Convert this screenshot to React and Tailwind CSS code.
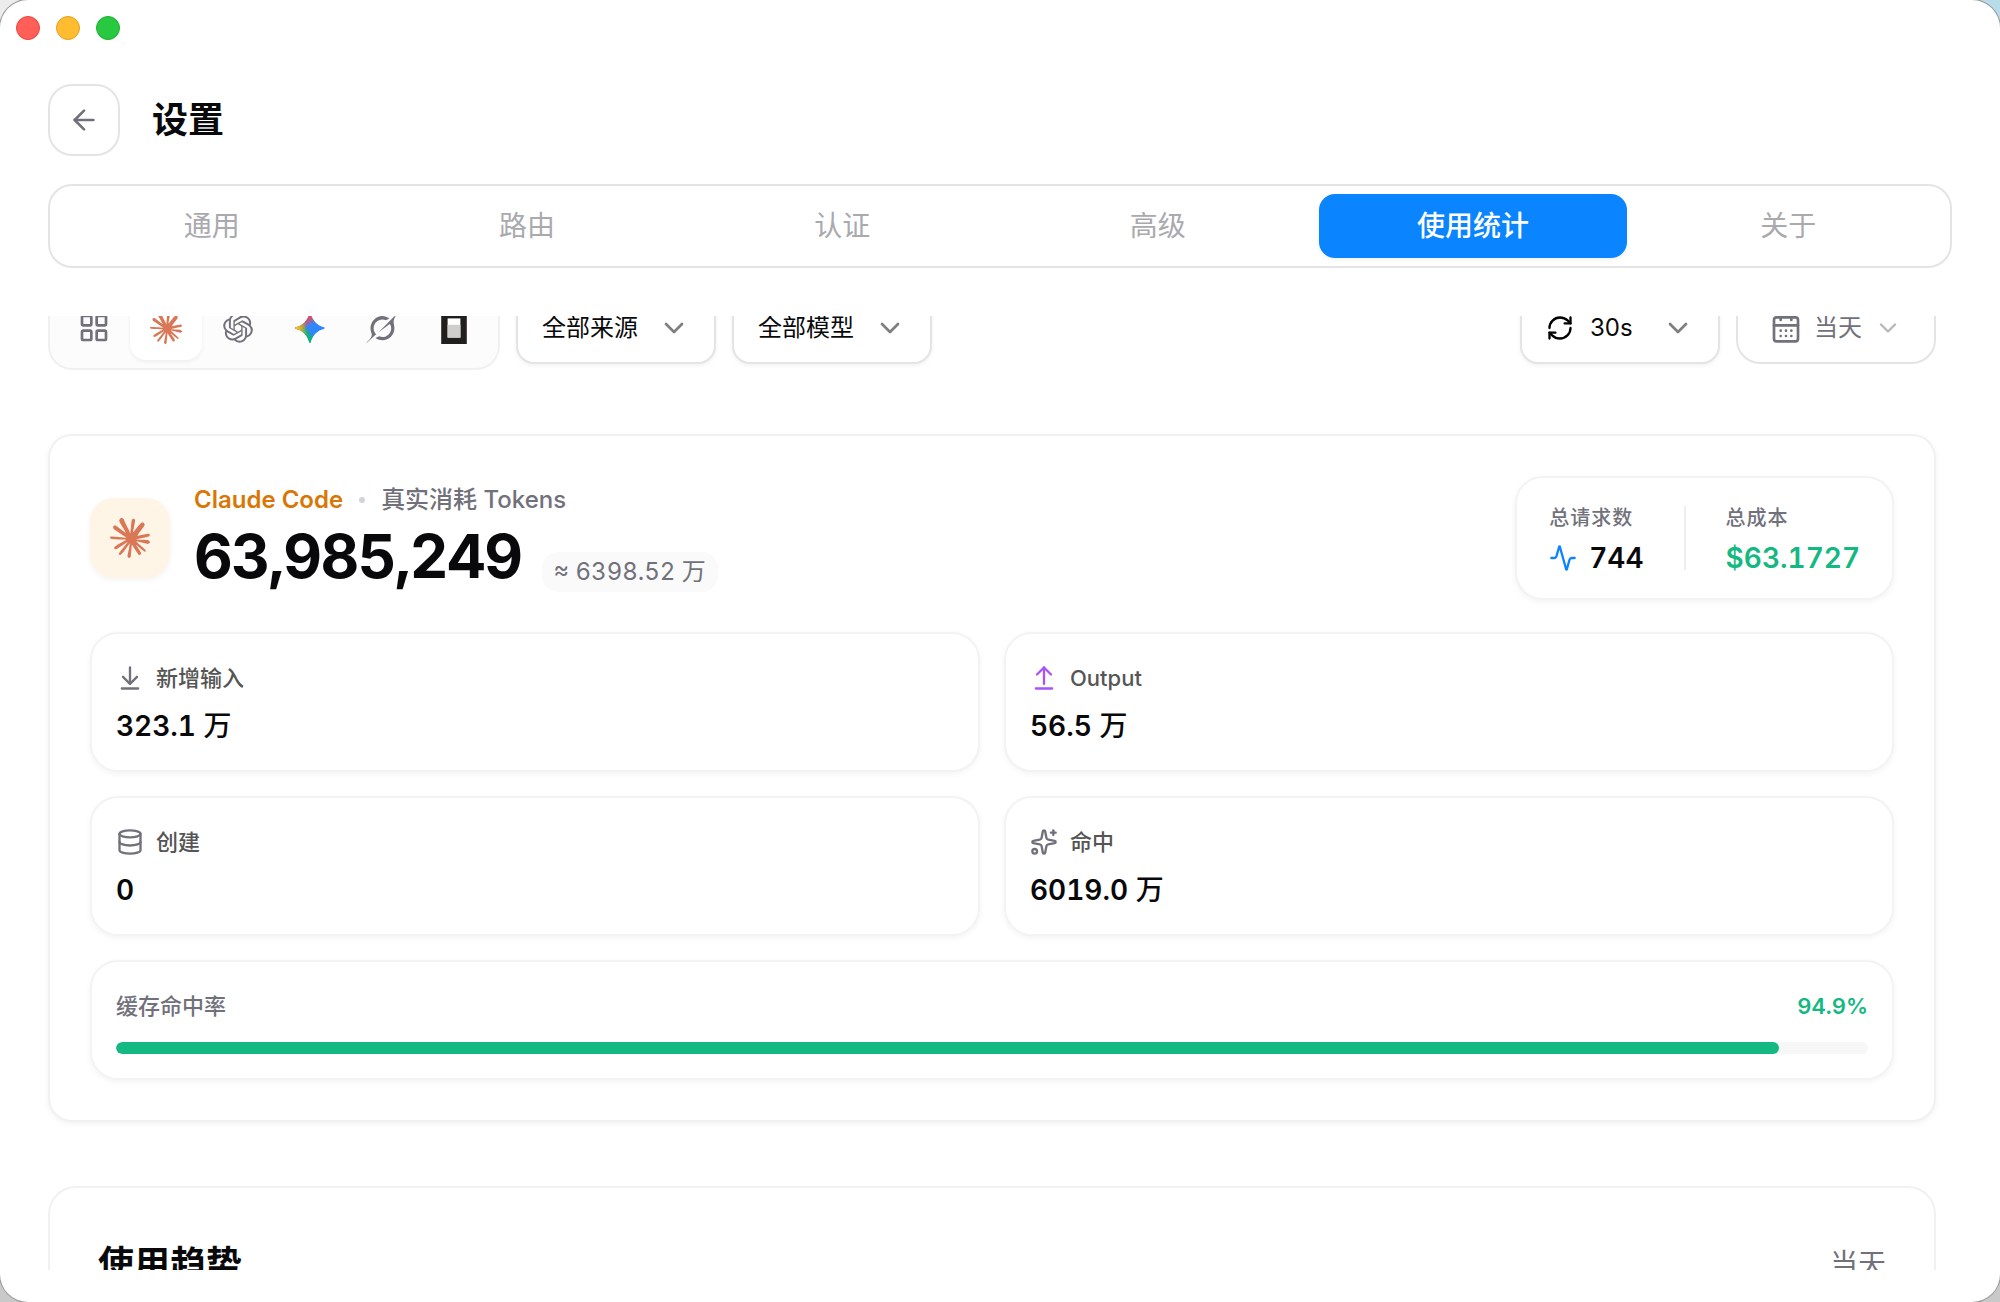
import React, { useLayoutEffect, useRef, useState } from 'react';
import {
  Activity,
  ArrowDownToLine,
  ArrowLeft,
  ArrowUpFromLine,
  CalendarDays,
  ChevronDown,
  Database,
  LayoutGrid,
  RefreshCw,
  Sparkles,
} from 'lucide-react';
import clsx from 'clsx';

const TABS = ['通用', '路由', '认证', '高级', '使用统计', '关于'];
const CACHE_HIT_RATE = 94.9;

const ClaudeIcon = ({ className }) => (
  <svg viewBox="0 0 24 24" className={className} fill="#D97757" aria-hidden="true">
    <path d="M4.709 15.955l4.72-2.647.08-.23-.08-.128H9.2l-.79-.048-2.698-.073-2.339-.097-2.266-.122-.571-.121L0 11.784l.055-.352.48-.321.686.06 1.52.103 2.278.158 1.652.097 2.449.255h.389l.055-.157-.134-.098-.103-.097-2.358-1.596-2.552-1.688-1.336-.972-.724-.491-.364-.462-.158-1.008.656-.722.881.06.225.061.893.686 1.908 1.476 2.491 1.833.365.304.145-.103.019-.073-.164-.274-1.355-2.446-1.446-2.49-.644-1.032-.17-.619a2.97 2.97 0 01-.104-.729L6.283.134 6.696 0l.996.134.42.364.62 1.414 1.002 2.229 1.555 3.03.456.898.243.832.091.255h.158V9.01l.128-1.706.237-2.095.23-2.695.08-.76.376-.91.747-.492.584.28.48.685-.067.444-.286 1.851-.559 2.903-.364 1.942h.212l.243-.242.985-1.306 1.652-2.064.73-.82.85-.904.547-.431h1.033l.76 1.129-.34 1.166-1.064 1.347-.881 1.142-1.264 1.7-.79 1.36.073.11.188-.02 2.856-.606 1.543-.28 1.841-.315.833.388.091.395-.328.807-1.969.486-2.309.462-3.439.813-.042.03.049.061 1.549.146.662.036h1.622l3.02.225.79.522.474.638-.079.485-1.215.62-1.64-.389-3.829-.91-1.312-.329h-.182v.11l1.093 1.068 2.006 1.81 2.509 2.33.127.578-.322.455-.34-.049-2.205-1.657-.851-.747-1.926-1.62h-.128v.17l.444.649 2.345 3.521.122 1.08-.17.353-.608.213-.668-.122-1.374-1.925-1.415-2.167-1.143-1.943-.14.08-.674 7.254-.316.37-.729.28-.607-.461-.322-.747.322-1.476.389-1.924.315-1.53.286-1.9.17-.632-.012-.042-.14.018-1.434 1.967-2.18 2.945-1.726 1.845-.414.164-.717-.37.067-.662.401-.589 2.388-3.036 1.44-1.882.93-1.086-.006-.158h-.055L4.132 18.56l-1.13.146-.487-.456.061-.746.231-.243 1.908-1.312-.006.006z" />
  </svg>
);

const OpenAIIcon = ({ className }) => (
  <svg viewBox="0 0 24 24" className={className} fill="currentColor" fillRule="evenodd" aria-hidden="true">
    <path d="M21.55 10.004a5.416 5.416 0 00-.478-4.501c-1.217-2.09-3.662-3.166-6.05-2.66A5.59 5.59 0 0010.831 1C8.39.995 6.224 2.546 5.473 4.838A5.553 5.553 0 001.76 7.496a5.487 5.487 0 00.691 6.5 5.416 5.416 0 00.477 4.502c1.217 2.09 3.662 3.165 6.05 2.66A5.586 5.586 0 0013.168 23c2.443.006 4.61-1.546 5.361-3.84a5.553 5.553 0 003.715-2.66 5.488 5.488 0 00-.693-6.497v.001zm-8.381 11.558a4.199 4.199 0 01-2.675-.954c.034-.018.093-.05.132-.074l4.44-2.53a.71.71 0 00.364-.623v-6.176l1.877 1.069c.02.01.033.029.036.05v5.115c-.003 2.274-1.87 4.118-4.174 4.123zM4.192 17.78a4.059 4.059 0 01-.498-2.763c.032.02.09.055.131.078l4.44 2.53c.225.13.504.13.73 0l5.42-3.088v2.138a.068.068 0 01-.027.057L9.9 19.288c-1.999 1.136-4.552.46-5.707-1.51h-.001zM3.023 8.216A4.15 4.15 0 015.198 6.41l-.002.151v5.06a.711.711 0 00.364.624l5.42 3.087-1.876 1.07a.067.067 0 01-.063.005l-4.489-2.559c-1.995-1.14-2.679-3.658-1.53-5.63h.001zm15.417 3.54l-5.42-3.088L14.896 7.6a.067.067 0 01.063-.006l4.489 2.557c1.998 1.14 2.683 3.662 1.529 5.633a4.163 4.163 0 01-2.174 1.807V12.38a.71.71 0 00-.363-.623zm1.867-2.773a6.04 6.04 0 00-.132-.078l-4.44-2.53a.731.731 0 00-.729 0l-5.42 3.088V7.325a.068.068 0 01.027-.057L14.1 4.713c2-1.137 4.555-.46 5.707 1.513.487.833.664 1.809.499 2.757h.001zm-11.741 3.81l-1.877-1.068a.065.065 0 01-.036-.051V6.559c.001-2.277 1.873-4.122 4.181-4.12.976 0 1.92.338 2.671.954-.034.018-.092.05-.131.073l-4.44 2.53a.71.71 0 00-.365.623l-.003 6.173v.002zm1.02-2.168L12 9.25l2.414 1.375v2.75L12 14.75l-2.415-1.375v-2.75z" />
  </svg>
);

const GEMINI_PATH =
  'M20.616 10.835a14.147 14.147 0 01-4.45-3.001 14.111 14.111 0 01-3.678-6.452.503.503 0 00-.975 0 14.134 14.134 0 01-3.679 6.452 14.155 14.155 0 01-4.45 3.001c-.65.28-1.318.505-2.002.678a.502.502 0 000 .975c.684.172 1.35.397 2.002.677a14.147 14.147 0 014.45 3.001 14.112 14.112 0 013.679 6.453.502.502 0 00.975 0c.172-.685.397-1.351.677-2.003a14.145 14.145 0 013.001-4.45 14.113 14.113 0 016.453-3.678.503.503 0 000-.975 13.245 13.245 0 01-2.003-.678z';

const GeminiIcon = ({ className }) => (
  <svg viewBox="0 0 24 24" className={className} aria-hidden="true">
    <defs>
      <linearGradient id="gm-green" gradientUnits="userSpaceOnUse" x1="7" x2="11" y1="15.5" y2="12">
        <stop stopColor="#08B962" />
        <stop offset="1" stopColor="#08B962" stopOpacity="0" />
      </linearGradient>
      <linearGradient id="gm-red" gradientUnits="userSpaceOnUse" x1="8" x2="11.5" y1="5.5" y2="11">
        <stop stopColor="#F94543" />
        <stop offset="1" stopColor="#F94543" stopOpacity="0" />
      </linearGradient>
      <linearGradient id="gm-yellow" gradientUnits="userSpaceOnUse" x1="3.5" x2="17.5" y1="13.5" y2="12">
        <stop stopColor="#FABC12" />
        <stop offset=".46" stopColor="#FABC12" stopOpacity="0" />
      </linearGradient>
    </defs>
    <path d={GEMINI_PATH} fill="#3186FF" />
    <path d={GEMINI_PATH} fill="url(#gm-green)" />
    <path d={GEMINI_PATH} fill="url(#gm-red)" />
    <path d={GEMINI_PATH} fill="url(#gm-yellow)" />
  </svg>
);

const GrokIcon = ({ className }) => (
  <svg viewBox="0 0 24 24" className={className} fill="currentColor" fillRule="evenodd" aria-hidden="true">
    <path d="M9.27 15.29l7.978-5.897c.391-.29.95-.177 1.137.272.98 2.369.542 5.215-1.41 7.169-1.951 1.954-4.667 2.382-7.149 1.406l-2.711 1.257c3.889 2.661 8.611 2.003 11.562-.953 2.341-2.344 3.066-5.539 2.388-8.42l.006.007c-.983-4.232.242-5.924 2.75-9.383.06-.082.12-.164.179-.248l-3.301 3.305v-.01L9.267 15.292M7.623 16.723c-2.792-2.67-2.31-6.801.071-9.184 1.761-1.763 4.647-2.483 7.166-1.425l2.705-1.25a7.808 7.808 0 00-1.829-1A8.975 8.975 0 005.984 5.83c-2.533 2.536-3.33 6.436-1.962 9.764 1.022 2.487-.653 4.246-2.34 6.022-.599.63-1.199 1.259-1.682 1.925l7.62-6.815" />
  </svg>
);

const OpenCodeIcon = ({ className }) => (
  <svg viewBox="0 0 300 300" className={className} aria-hidden="true">
    <path d="M30 0h240v300H30z" fill="#211E1E" />
    <path d="M90 60h120v180H90z" fill="#fff" />
    <path d="M90 120h120v120H90z" fill="#CFCECD" />
  </svg>
);

const APPS = [
  { id: 'all', label: '全部', Icon: LayoutGrid },
  { id: 'claude', label: 'Claude Code', Icon: ClaudeIcon },
  { id: 'codex', label: 'Codex', Icon: OpenAIIcon },
  { id: 'gemini', label: 'Gemini', Icon: GeminiIcon },
  { id: 'grok', label: 'Grok', Icon: GrokIcon },
  { id: 'opencode', label: 'OpenCode', Icon: OpenCodeIcon },
];

const STATS = [
  { label: '新增输入', value: '323.1', unit: '万', Icon: ArrowDownToLine, color: 'text-zinc-500' },
  { label: 'Output', value: '56.5', unit: '万', Icon: ArrowUpFromLine, color: 'text-[#a855f7]' },
  { label: '创建', value: '0', Icon: Database, color: 'text-zinc-500' },
  { label: '命中', value: '6019.0', unit: '万', Icon: Sparkles, color: 'text-zinc-500' },
];

const FilterSelect = ({ label, options, icon }) => (
  <label className="relative flex h-[72px] w-[200px] items-center gap-4 rounded-[18px] border-2 border-[#e4e4e4] bg-white px-6 shadow-[0_2px_4px_rgba(0,0,0,0.05)]">
    <span className="sr-only">{label}</span>
    {icon}
    <select className="min-w-0 flex-1 appearance-none bg-transparent text-2xl text-zinc-950 outline-none">
      {options.map(o => <option key={o}>{o}</option>)}
    </select>
    <ChevronDown className="pointer-events-none size-8 shrink-0 opacity-50" />
  </label>
);

const StatCard = ({ label, value, unit, Icon, color }) => (
  <div className="flex flex-col gap-2 rounded-[28px] border-2 border-[#f3f3f3] bg-white p-6 shadow-[0_2px_6px_rgba(0,0,0,0.05)]">
    <div className="flex h-10 items-center gap-3">
      <Icon className={clsx('size-7', color)} />
      <span className="text-[22px] font-medium text-[#555555]">{label}</span>
    </div>
    <p className="text-[28px] leading-10 font-semibold tabular-nums text-zinc-950">
      {value} {unit && <span className="font-medium">{unit}</span>}
    </p>
  </div>
);

const Toolbar = () => {
  const [app, setApp] = useState('claude');
  return (
    <div className="flex items-center justify-between">
      <div className="flex items-center gap-4">
        <div className="flex rounded-3xl border-2 border-[#f0f0f0] bg-[#fcfcfc] p-2">
          {APPS.map(({ id, label, Icon }) => (
            <button
              key={id}
              aria-label={label}
              onClick={() => setApp(id)}
              className={clsx(
                'flex h-16 w-[72px] items-center justify-center rounded-2xl text-zinc-500',
                app === id && 'bg-white shadow-[0_2px_4px_rgba(0,0,0,0.06)]'
              )}
            >
              <Icon className="size-8" />
            </button>
          ))}
        </div>
        <FilterSelect label="来源" options={['全部来源']} />
        <FilterSelect label="模型" options={['全部模型']} />
      </div>
      <div className="flex items-center gap-4">
        <FilterSelect label="刷新间隔" options={['30s', '60s']} icon={<RefreshCw className="size-7 shrink-0" />} />
        <button className="flex h-[72px] items-center gap-3 rounded-3xl border-2 border-[#e4e4e4] bg-white px-8 text-2xl text-zinc-500">
          <CalendarDays className="size-8" />
          当天
          <ChevronDown className="size-7 opacity-50" />
        </button>
      </div>
    </div>
  );
};

const UsageHero = () => (
  <section className="rounded-3xl border-2 border-[#f1f1f1] bg-white p-10 shadow-[0_2px_6px_rgba(0,0,0,0.05)]">
    <div className="flex items-center justify-between">
      <div className="flex items-center gap-6">
        <div className="flex size-20 items-center justify-center rounded-3xl bg-[#fef5e7] shadow-[0_2px_6px_rgba(0,0,0,0.05)]">
          <ClaudeIcon className="size-10" />
        </div>
        <div className="pt-1">
          <div className="flex items-center gap-4 text-2xl">
            <span className="font-semibold text-[#d97706]">Claude Code</span>
            <span className="size-1.5 rounded-full bg-zinc-300" />
            <span className="font-medium text-zinc-500">真实消耗 Tokens</span>
          </div>
          <div className="flex items-end gap-5">
            <span className="text-6xl leading-20 font-bold tracking-tight tabular-nums text-zinc-950">63,985,249</span>
            <span className="mb-1 rounded-2xl bg-[#fafafa] px-3 py-1 text-2xl tabular-nums text-zinc-500">≈ 6398.52 万</span>
          </div>
        </div>
      </div>

      <dl className="flex items-center gap-10 rounded-[28px] border-2 border-[#f3f3f3] bg-white px-8 py-[22px] shadow-[0_2px_6px_rgba(0,0,0,0.05)]">
        <div className="flex flex-col gap-1">
          <dt className="text-xl leading-9 font-medium tracking-wider text-zinc-500">总请求数</dt>
          <dd className="flex items-center gap-3 text-[28px] leading-9 font-semibold tabular-nums text-zinc-950">
            <Activity className="size-7 text-[#0a84ff]" />
            744
          </dd>
        </div>
        <div className="h-16 w-0.5 bg-[#eeeeee]" />
        <div className="flex flex-col gap-1">
          <dt className="text-xl leading-9 font-medium tracking-wider text-zinc-500">总成本</dt>
          <dd className="text-[28px] leading-9 font-semibold tabular-nums text-[#14b881]">$63.1727</dd>
        </div>
      </dl>
    </div>

    <div className="mt-8 grid grid-cols-2 gap-6">
      {STATS.map(stat => <StatCard key={stat.label} {...stat} />)}
    </div>

    <div className="mt-6 rounded-[28px] border-2 border-[#f3f3f3] bg-white p-6 shadow-[0_2px_6px_rgba(0,0,0,0.05)]">
      <div className="flex items-center justify-between text-[22px] leading-10">
        <span className="font-medium text-zinc-500">缓存命中率</span>
        <span className="font-semibold tabular-nums text-[#14b881]">{CACHE_HIT_RATE}%</span>
      </div>
      <div className="mt-4 h-3 overflow-hidden rounded-full bg-[#f7f7f7]">
        <div className="h-full rounded-full bg-[#14b881]" style={{ width: `${CACHE_HIT_RATE}%` }} />
      </div>
    </div>
  </section>
);

const App = () => {
  const [tab, setTab] = useState('使用统计');
  const scroller = useRef(null);

  // the list opens slightly scrolled, under the tab bar
  useLayoutEffect(() => {
    scroller.current.scrollTop = 30;
  }, []);

  return (
    <div className="h-screen bg-[conic-gradient(#b9dcea_25%,#c9c9c9_25%_75%,#ececec_75%)] font-['Inter','Noto_Sans_CJK_SC',sans-serif]">
      <div className="flex h-full flex-col overflow-hidden rounded-[28px] bg-white pb-8 shadow-[0_0_0_1px_#9a9a9a]">
        {/* Window controls */}
        <div className="flex shrink-0 gap-4 p-4">
          <span className="size-6 rounded-full border border-[#e2463f] bg-[#ff5f57]" />
          <span className="size-6 rounded-full border border-[#e0a028] bg-[#febc2e]" />
          <span className="size-6 rounded-full border border-[#1fac32] bg-[#28c840]" />
        </div>

        <header className="mt-7 flex shrink-0 items-center gap-8 px-12">
          <button aria-label="返回" className="flex size-[72px] items-center justify-center rounded-3xl border-2 border-[#e4e4e4] bg-white text-zinc-500">
            <ArrowLeft className="size-8" />
          </button>
          <h1 className="text-4xl font-semibold text-zinc-950">设置</h1>
        </header>

        <nav className="mx-12 mt-7 grid shrink-0 grid-cols-6 gap-2 rounded-3xl border-2 border-[#e4e4e4] p-2">
          {TABS.map(name => (
            <button
              key={name}
              onClick={() => setTab(name)}
              className={clsx(
                'h-16 rounded-2xl text-[28px]',
                tab === name ? 'bg-[#0a84ff] font-medium text-white shadow-[0_2px_4px_rgba(0,0,0,0.06)]' : 'text-[#a9a9ae]'
              )}
            >
              {name}
            </button>
          ))}
        </nav>

        <main ref={scroller} className="mt-12 min-h-0 flex-1 overflow-y-auto pr-16 pl-12 [scrollbar-width:none]">
          <div className="flex flex-col gap-16">
            <Toolbar />
            <UsageHero />
            <section className="min-h-96 rounded-[28px] border-2 border-[#f1f1f1] bg-white p-12">
              <div className="flex items-center justify-between">
                <h2 className="text-4xl leading-14 font-semibold text-zinc-950">使用趋势</h2>
                <span className="text-[28px] text-zinc-500">当天</span>
              </div>
            </section>
          </div>
        </main>
      </div>
    </div>
  );
};

export default App;
